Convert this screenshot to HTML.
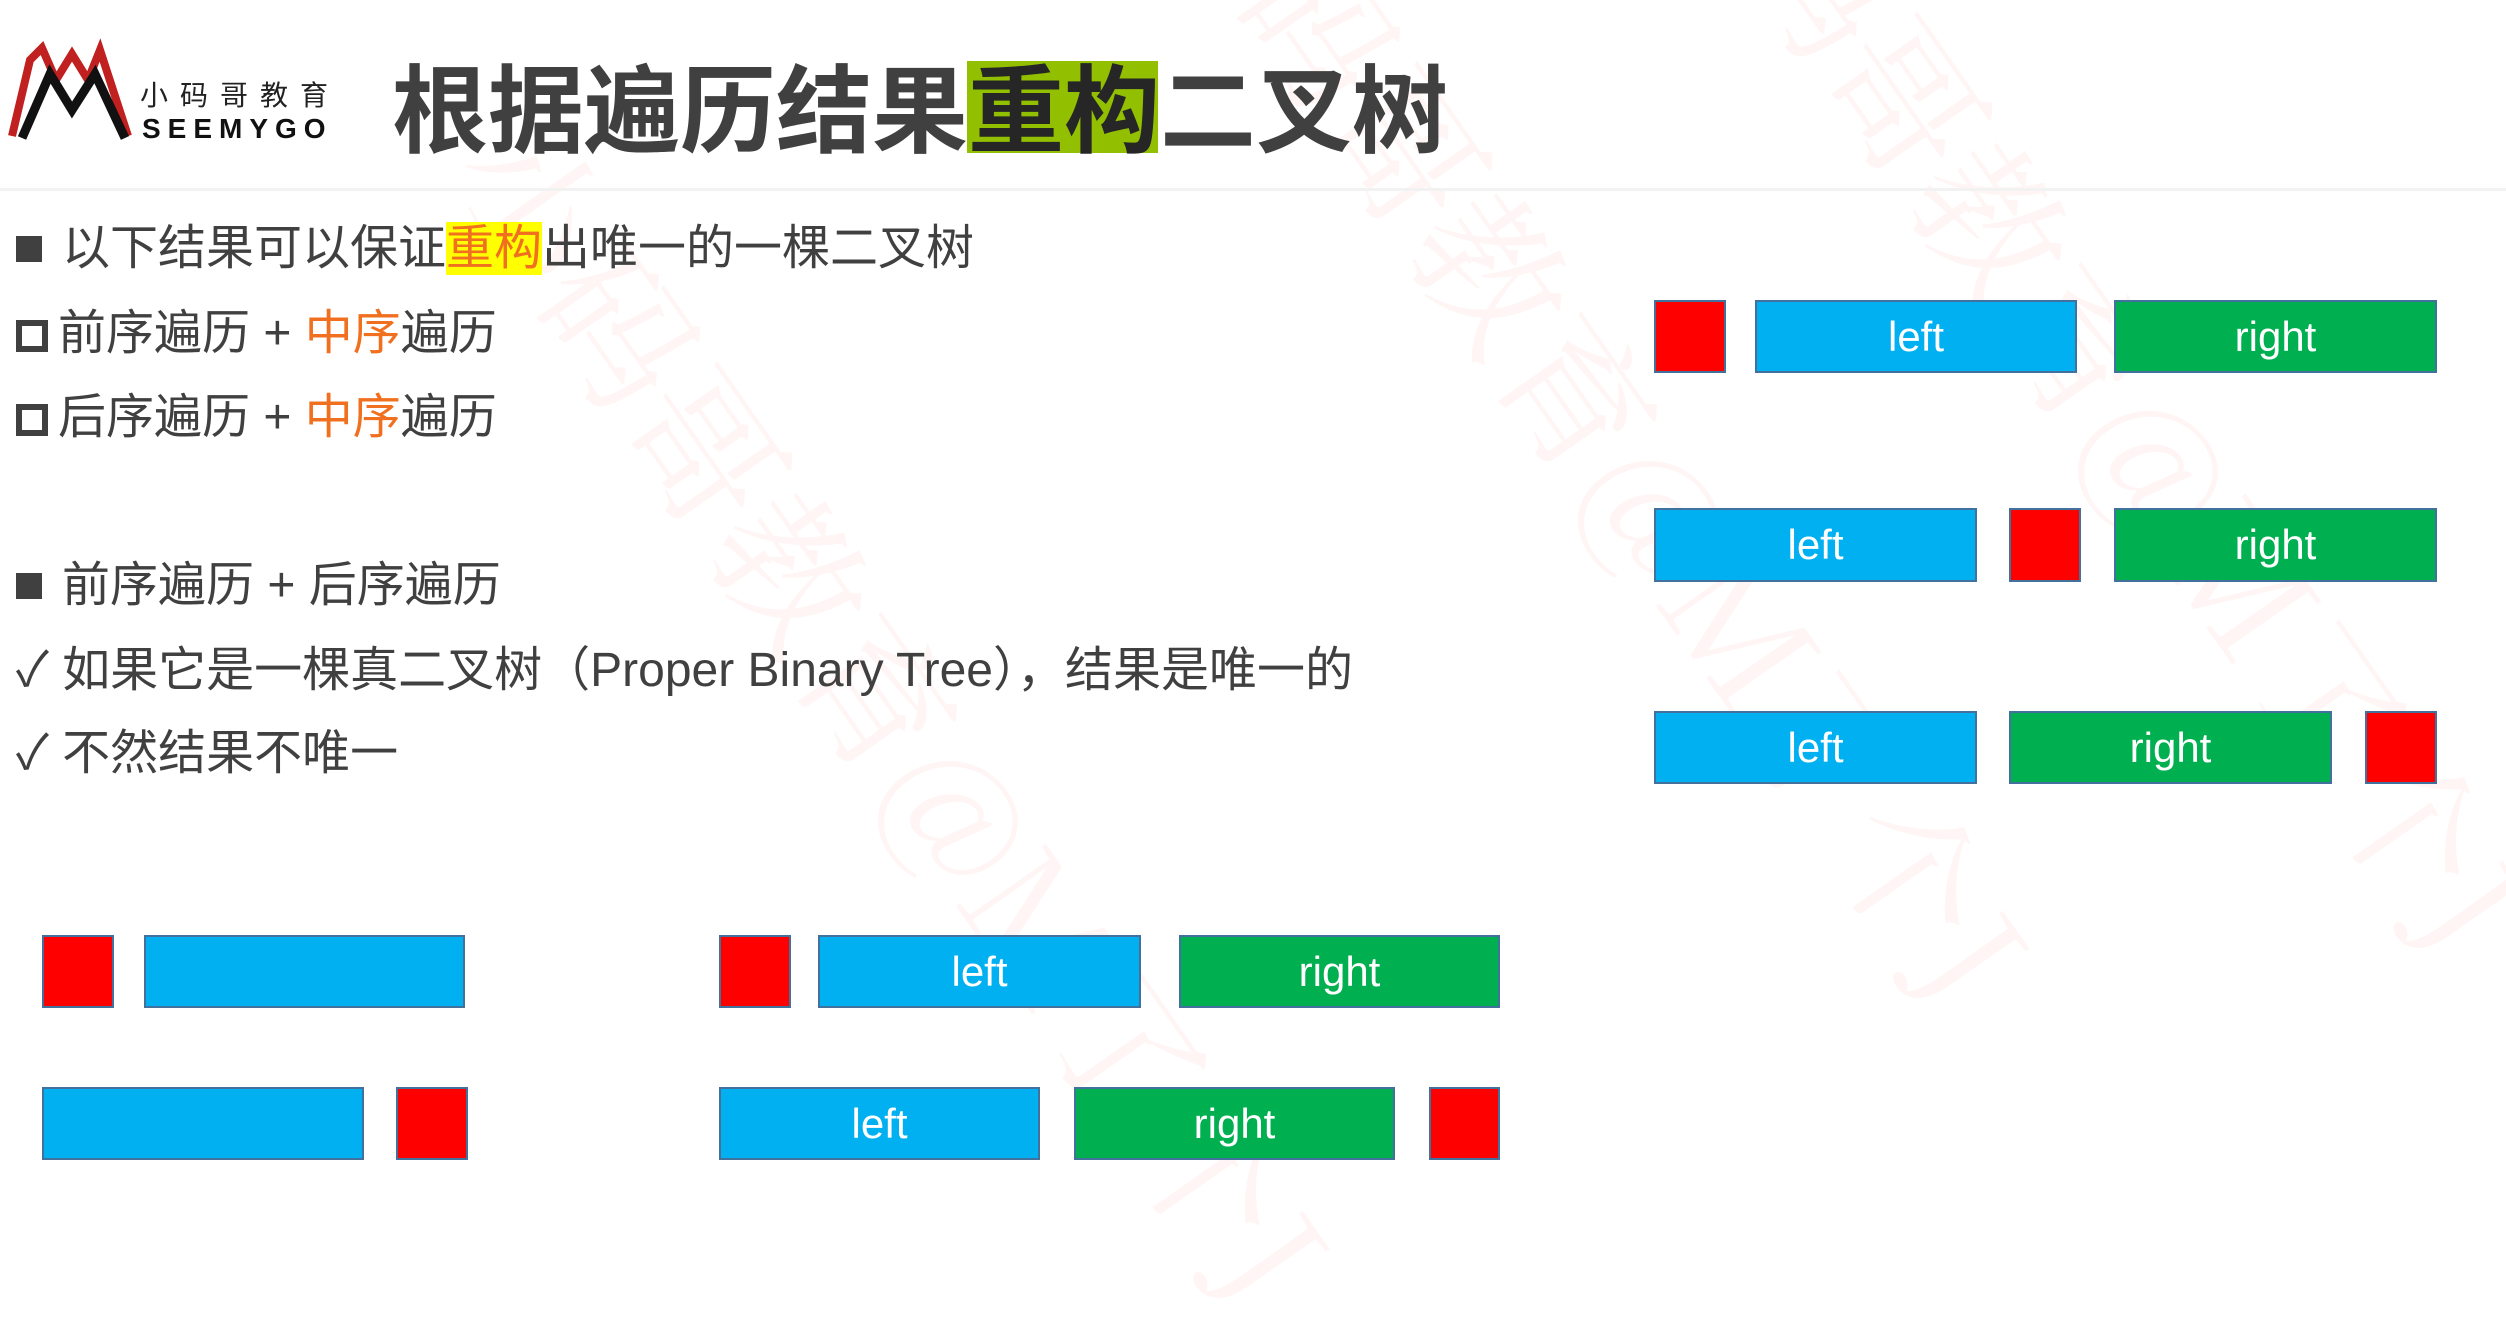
<!DOCTYPE html>
<html><head><meta charset="utf-8"><style>
*{margin:0;padding:0;box-sizing:border-box}
body{width:2506px;height:1272px;background:#fff;position:relative;overflow:hidden;font-family:"Liberation Sans","Noto Sans CJK SC",sans-serif;color:#404040}
.t{position:absolute;white-space:nowrap}
.b{position:absolute;border:2px solid #41719c;color:#fff;font-size:42px;text-align:center;display:flex;align-items:center;justify-content:center}
.bl{background:#00b0f0}.gr{background:#00b050}.rd{background:#ff0000}
.line{font-size:48px;left:16px;color:#404040}
.o{color:#f07020}
.cb{display:inline-block;width:32px;height:32px;border:6px solid #404040;margin-right:10px;vertical-align:-3px}
.sq{display:inline-block;width:26px;height:26px;background:#404040;margin-right:20px;vertical-align:2px}
.wm{position:absolute;color:rgba(255,0,0,0.04);font-size:150px;font-family:"Noto Serif CJK SC",serif;transform:rotate(55deg);white-space:nowrap}
</style></head><body>
<div class="wm" style="left:900px;top:300px">小码哥教育@M了个J</div>
<div class="wm" style="left:1400px;top:250px">小码哥教育@M了个J</div>
<div class="wm" style="left:200px;top:600px">小码哥教育@M了个J</div>

<svg style="position:absolute;left:0;top:30px" width="140" height="120" viewBox="0 30 140 120">
<polyline points="12,136 30,60 42,48 56,80 72,54 88,80 100,50 128,136" fill="none" stroke="#c0201f" stroke-width="8"/>
<polyline points="22,136 50,72 72,108 95,72 125,136" fill="none" stroke="#111" stroke-width="9" transform="translate(0,2)"/>
</svg>
<div class="t" style="left:140px;top:74px;font-size:28px;letter-spacing:12px;color:#222;font-family:'Noto Sans CJK SC',sans-serif">小码哥教育</div>
<div class="t" style="left:142px;top:113px;font-size:28px;letter-spacing:7px;color:#111;font-weight:bold">SEEMYGO</div>

<div style="position:absolute;left:967px;top:61px;width:191px;height:92px;background:#92c000"></div>
<div class="t" style="left:392px;top:44px;font-size:96px;font-weight:bold;color:#404040;font-family:'Noto Sans CJK SC',sans-serif;line-height:120px">根据遍历结果<span style="color:#262626">重构</span>二叉树</div>
<div style="position:absolute;left:0;top:188px;width:2506px;height:3px;background:#f2f2f2"></div>

<div class="t line" style="top:208px"><span class="sq"></span>以下结果可以保证<span style="background:#ffff00;color:#f07020">重构</span>出唯一的一棵二叉树</div>
<div class="t line" style="top:293px"><span class="cb"></span>前序遍历 + <span class="o">中序</span>遍历</div>
<div class="t line" style="top:377px"><span class="cb"></span>后序遍历 + <span class="o">中序</span>遍历</div>
<div class="t line" style="top:545px"><span class="sq"></span>前序遍历 + 后序遍历</div>
<div class="t line" style="top:630px">✓ 如果它是一棵真二叉树（Proper Binary Tree），结果是唯一的</div>
<div class="t line" style="top:713px">✓ 不然结果不唯一</div>

<div class="b rd" style="left:1654px;top:300px;width:72px;height:73px"></div>
<div class="b bl" style="left:1755px;top:300px;width:322px;height:73px">left</div>
<div class="b gr" style="left:2114px;top:300px;width:323px;height:73px">right</div>

<div class="b bl" style="left:1654px;top:508px;width:323px;height:74px">left</div>
<div class="b rd" style="left:2009px;top:508px;width:72px;height:74px"></div>
<div class="b gr" style="left:2114px;top:508px;width:323px;height:74px">right</div>

<div class="b bl" style="left:1654px;top:711px;width:323px;height:73px">left</div>
<div class="b gr" style="left:2009px;top:711px;width:323px;height:73px">right</div>
<div class="b rd" style="left:2365px;top:711px;width:72px;height:73px"></div>

<div class="b rd" style="left:42px;top:935px;width:72px;height:73px"></div>
<div class="b bl" style="left:144px;top:935px;width:321px;height:73px"></div>
<div class="b bl" style="left:42px;top:1087px;width:322px;height:73px"></div>
<div class="b rd" style="left:396px;top:1087px;width:72px;height:73px"></div>

<div class="b rd" style="left:719px;top:935px;width:72px;height:73px"></div>
<div class="b bl" style="left:818px;top:935px;width:323px;height:73px">left</div>
<div class="b gr" style="left:1179px;top:935px;width:321px;height:73px">right</div>
<div class="b bl" style="left:719px;top:1087px;width:321px;height:73px">left</div>
<div class="b gr" style="left:1074px;top:1087px;width:321px;height:73px">right</div>
<div class="b rd" style="left:1429px;top:1087px;width:71px;height:73px"></div>
</body></html>
